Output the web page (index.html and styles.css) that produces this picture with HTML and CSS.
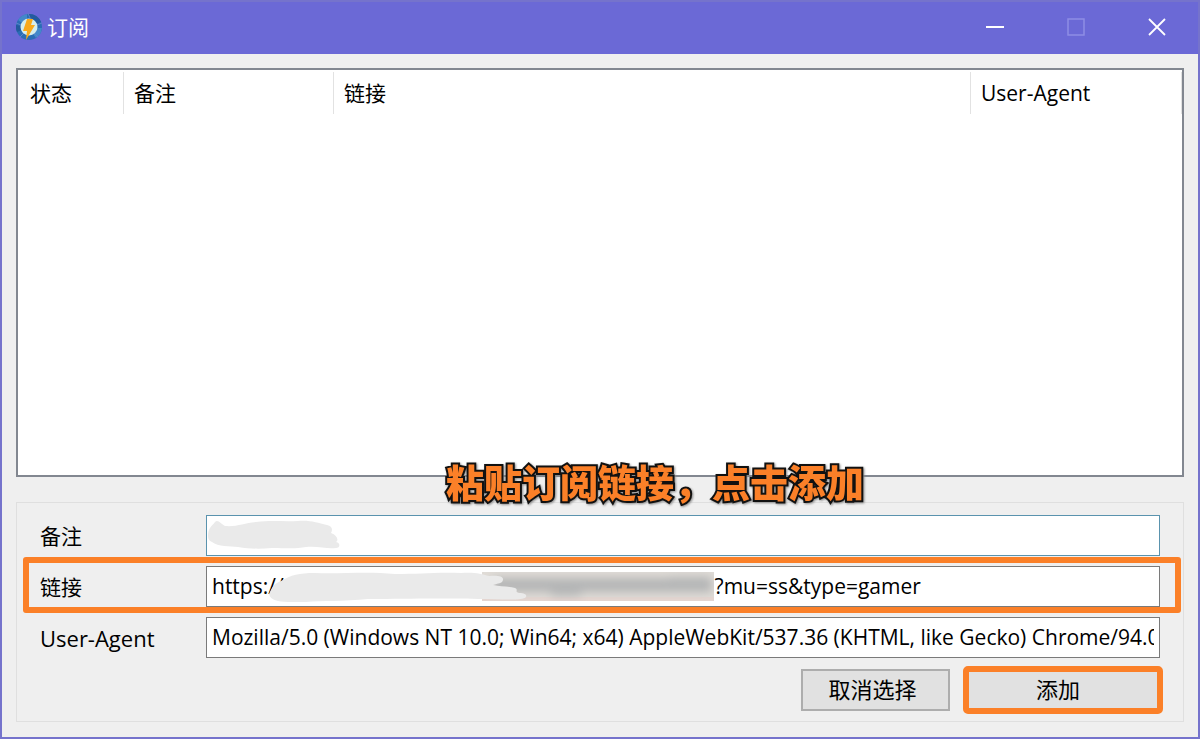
FILE: index.html
```html
<!DOCTYPE html>
<html lang="zh-CN">
<head>
<meta charset="utf-8">
<meta name="viewport" content="width=device-width, initial-scale=1">
<title>订阅</title>
<link rel="stylesheet" href="styles.css">
</head>
<body>
<div class="window">
  <header class="titlebar">
    <svg class="app-icon" viewBox="0 0 28 28" aria-hidden="true">
      <circle cx="14" cy="14" r="13" fill="#2a6db5"/>
      <path d="M14 1a13 13 0 0 1 12 8l-5 2a8 8 0 0 0-7-5zM2 19a13 13 0 0 1-1-7l5 1a8 8 0 0 0 1 4z" fill="#235a9e"/>
      <path d="M3 7a13 13 0 0 1 9-6v5a8 8 0 0 0-5 4zM27 15a13 13 0 0 1-6 10l-3-4a8 8 0 0 0 4-6z" fill="#4388ca"/>
      <path d="M13 0l2 5M1 10l5 2M5 24l4-4M23 24l-4-4M27 10l-5 2" stroke="#5d83c9" stroke-width="1"/>
      <circle cx="14" cy="14" r="8.500" fill="#d5eeee"/>
      <path d="M12 6h6l-2 6h4l-9 15 1-9H8z" fill="#f8a91b"/>
    </svg>
    <h1 class="title">订阅</h1>
    <div class="controls">
      <button class="control" type="button" aria-label="最小化"><svg viewBox="0 0 20 20"><path d="M1 10h18" stroke="#fff" stroke-width="2"/></svg></button>
      <button class="control" type="button" aria-label="最大化" disabled><svg viewBox="0 0 20 20"><path d="M2 2h16v16H2z" fill="none" stroke="#8f8de5" stroke-width="1.500"/></svg></button>
      <button class="control" type="button" aria-label="关闭"><svg viewBox="0 0 20 20"><path d="M2 2l16 16M18 2L2 18" stroke="#fff" stroke-width="1.800"/></svg></button>
    </div>
  </header>
  <main class="content">
    <div class="list">
      <table class="table">
        <thead>
          <tr><th class="col-status">状态</th><th class="col-note">备注</th><th>链接</th><th class="col-agent">User-Agent</th></tr>
        </thead>
      </table>
    </div>
    <form class="group">
      <p class="callout">粘贴订阅链接，点击添加</p>
      <div class="row">
        <label for="note">备注</label>
        <div class="field">
          <input class="input input-focus" id="note" type="text">
          <svg class="mask mask-note" viewBox="0 0 134 32" aria-hidden="true"><path d="M1 18C1 10 5 8 8 4c3-3 6 2 10 4 12 1 19-3 31-4 17-2 27 0 42-1 13-1 19 2 29 4 5 1 6 4 4 8 6 2 8 7 5 9 5 1 4 6 0 6-10 1-17-2-30-1-10 2-20 1-34 1-12 1-22 1-34-1-8-1-20 0-26-5C2 23 1 21 1 18z" fill="#eaeaea"/></svg>
        </div>
      </div>
      <div class="row row-marked">
        <label for="link">链接</label>
        <div class="field">
          <input class="input" id="link" type="text" value="https://                                                                               ?mu=ss&amp;type=gamer">
          <svg class="mask mask-link" viewBox="0 0 448 32" aria-hidden="true">
            <defs>
              <filter id="soft" filterUnits="userSpaceOnUse" x="200" y="-10" width="260" height="52"><feGaussianBlur stdDeviation="5"/></filter>
              <clipPath id="strip"><path d="M215 2h232v29H215z"/></clipPath>
            </defs>
            <g clip-path="url(#strip)">
              <path d="M215 2h232v29H215z" fill="#e0dcd7"/>
              <path d="M215 27h232v4H215z" fill="#e5d6d1"/>
              <path d="M225 15h220M284 19h30M334 15h34M402 14h40" fill="none" stroke="#b4b5b6" stroke-width="14" filter="url(#soft)"/>
            </g>
            <path d="M2 24c3-6 4-10 12-13C24 5 32 3 48 3c28 1 52-2 80 1 25 0 41-2 66-1 14-1 20 1 28 3 8-1 15 0 14 4-1 4-5 3-10 5 7 2 16 1 22 3 4 2-1 4 4 5 6 0 8 2 7 4-3 4-25 2-48 2-49-1-72 0-110 0-28 3-54 1-69 4-15-2-28 0-30-9z" fill="#eaeaea"/>
          </svg>
        </div>
      </div>
      <div class="row">
        <label class="label-agent" for="agent">User-Agent</label>
        <div class="field">
          <input class="input" id="agent" type="text" value="Mozilla/5.0 (Windows NT 10.0; Win64; x64) AppleWebKit/537.36 (KHTML, like Gecko) Chrome/94.0">
        </div>
      </div>
      <div class="actions">
        <button class="button" type="button">取消选择</button>
        <button class="button button-add" type="button">添加</button>
      </div>
    </form>
  </main>
</div>
</body>
</html>
```
FILE: styles.css
```css
* { box-sizing: border-box; }
body {
  margin: 0;
  color: #000;
  font: 21px/30px "Open Sans", "Noto Sans CJK SC", sans-serif;
}
.window {
  display: flex;
  flex-direction: column;
  min-height: 100vh;
  border: 2px solid #7573cc;
  background: #efefef;
}
.titlebar {
  display: flex;
  align-items: center;
  height: 52px;
  padding: 0 1px 2px 13px;
  background: #6b69d6;
  color: #fff;
}
.app-icon { width: 28px; height: 28px; }
.title {
  flex: 1;
  margin: 0 0 0 4px;
  font-size: 21px;
  font-weight: 400;
}
.controls { display: flex; }
.control {
  display: grid;
  place-items: center;
  width: 81px;
  height: 48px;
  padding: 0;
  border: 0;
  background: transparent;
}
.control svg { width: 20px; height: 20px; }
.content {
  display: flex;
  flex: 1;
  flex-direction: column;
  gap: 25px;
  padding: 14px 14px 15px;
}
.list {
  flex: 1;
  padding-top: 2px;
  border: 2px solid #828790;
  background: #fff;
}
.table {
  width: 100%;
  border-collapse: separate;
  border-spacing: 0;
  table-layout: fixed;
}
.table th {
  height: 42px;
  padding: 0 0 1px 10px;
  border-right: 1px solid #e2e2e2;
  font-weight: 400;
  text-align: left;
}
.table .col-status { width: 106px; padding-left: 12px; }
.table .col-note { width: 210px; }
.table .col-agent { width: 211px; }
.group {
  position: relative;
  display: flex;
  flex-direction: column;
  gap: 10px;
  padding: 12px 23px 10px;
  border: 1px solid #dfdfdf;
}
.callout {
  position: absolute;
  top: -50px;
  left: 429px;
  z-index: 1;
  margin: 0;
  color: #fb8028;
  font: 900 38px/56px "Noto Sans CJK SC", sans-serif;
  white-space: nowrap;
  -webkit-text-stroke: 4px #111;
  paint-order: stroke fill;
  filter: drop-shadow(1px 1px 1px #888);
}
.row {
  position: relative;
  display: grid;
  grid-template-columns: 166px 1fr;
  align-items: center;
}
.row-marked::after {
  content: "";
  position: absolute;
  inset: -9px -21px -6px -17px;
  border: 6px solid #fb8028;
  border-radius: 3px;
  pointer-events: none;
}
.label-agent { font-size: 22px; }
.field { position: relative; }
.input {
  display: block;
  width: 100%;
  height: 41px;
  padding: 0 5px 1px;
  border: 1px solid #7a7a7a;
  border-radius: 0;
  outline: 0;
  background: #fff;
  color: #000;
  font: inherit;
}
.input-focus { border-color: #5a93ae; }
.mask { position: absolute; pointer-events: none; }
.mask-note { top: 3px; left: 1px; width: 134px; height: 32px; }
.mask-link { top: 4px; left: 61px; width: 448px; height: 32px; }
.actions {
  display: flex;
  justify-content: flex-end;
  gap: 16px;
  padding-top: 1px;
}
.button {
  width: 149px;
  height: 42px;
  padding: 0 6px 2px 0;
  border: 2px solid #adadad;
  border-radius: 0;
  background: #e1e1e1;
  color: #000;
  font: inherit;
  font-size: 22px;
}
.button-add {
  width: 194px;
  padding-right: 10px;
  border-radius: 2px;
  outline: 6px solid #fb8028;
  outline-offset: -3px;
}
```
